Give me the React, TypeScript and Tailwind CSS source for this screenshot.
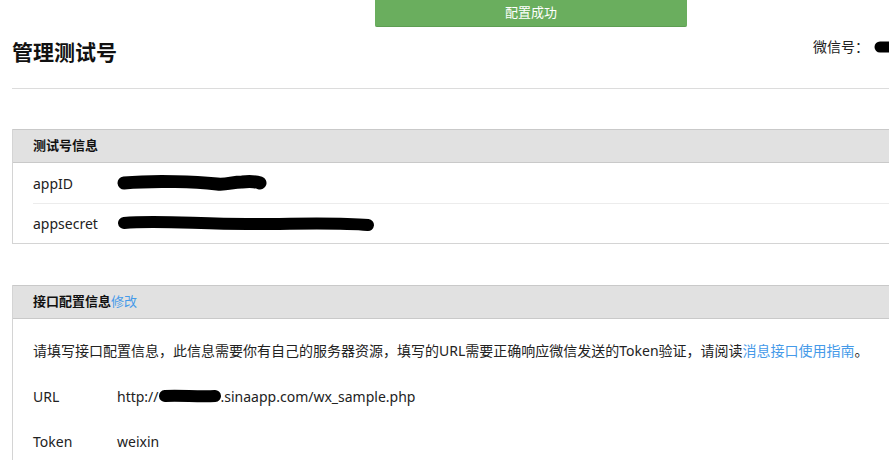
const font = "font-['Noto_Sans','Noto_Sans_CJK_SC',sans-serif]";

const Blob = ({ w, h, d, sw = 12 }: { w: number; h: number; d: string; sw?: number }) => (
  <svg width={w} height={h} viewBox={`0 0 ${w} ${h}`} className="block">
    <path d={d} fill="none" stroke="#000" strokeLinecap="round" strokeLinejoin="round" strokeWidth={sw} />
  </svg>
);

const PanelHeader = ({ children }: any) => (
  <div className="h-[34px] bg-[#e1e1e1] border-t border-b border-[#c9c9c9] pl-[20px] flex items-center text-[13px] font-bold text-[#111]">
    {children}
  </div>
);

export default function App() {
  return (
    <div className={`relative w-[889px] h-[460px] overflow-hidden bg-white text-[#222] ${font}`}>
      <div className="absolute left-[375px] top-0 w-[312px] h-[27px] bg-[#6aae5e] border-b border-[#5d9e52] rounded-b-[2px] flex items-center justify-center text-white text-[13px]">
        配置成功
      </div>

      <div className="pl-[12px]">
        <div className="h-[89px] border-b border-[#dcdcdc] flex justify-between items-start">
          <h1 className="mt-[37px] text-[21px] leading-[30px] font-bold text-[#111]">管理测试号</h1>
          <div className="mt-[38px] flex items-center gap-[4px] text-[14px] leading-[18px]">
            <span>微信号：</span>
            <Blob w={16} h={14} d="M7 7 L16 7" sw={11} />
          </div>
        </div>

        <div className="mt-[40px] border-l border-b border-[#d4d4d4]">
          <PanelHeader>测试号信息</PanelHeader>
          <div className="ml-[20px] h-[41px] border-b border-[#ececec] flex items-center text-[14px]">
            <span className="w-[84px]">appID</span>
            <Blob w={150} h={20} d="M7 10 C40 7 80 9 100 11 C110 12 115 9 125 9 C135 8 140 9 143 10" sw={13} />
          </div>
          <div className="ml-[20px] h-[39px] flex items-center text-[14px]">
            <span className="w-[84px]">appsecret</span>
            <Blob w={258} h={20} d="M7 9 C40 6 80 10 130 10 C180 10 220 8 251 11" sw={12} />
          </div>
        </div>

        <div className="mt-[41px] border-l border-[#d4d4d4]">
          <PanelHeader>
            接口配置信息<span className="text-[#459ae9] font-normal">修改</span>
          </PanelHeader>
          <div className="pl-[20px] pt-[22px] text-[14px]">
            <p className="leading-[20px]">
              请填写接口配置信息，此信息需要你有自己的服务器资源，填写的URL需要正确响应微信发送的Token验证，请阅读
              <span className="text-[#459ae9]">消息接口使用指南</span>。
            </p>
            <div className="mt-[15px] h-[40px] flex items-center">
              <span className="w-[84px]">URL</span>
              <span>http://</span>
              <Blob w={62} h={16} d="M6 8 C20 7 40 9 56 8" sw={12} />
              <span>.sinaapp.com/wx_sample.php</span>
            </div>
            <div className="mt-[5px] h-[40px] flex items-center">
              <span className="w-[84px]">Token</span>
              <span>weixin</span>
            </div>
          </div>
        </div>
      </div>
    </div>
  );
}
